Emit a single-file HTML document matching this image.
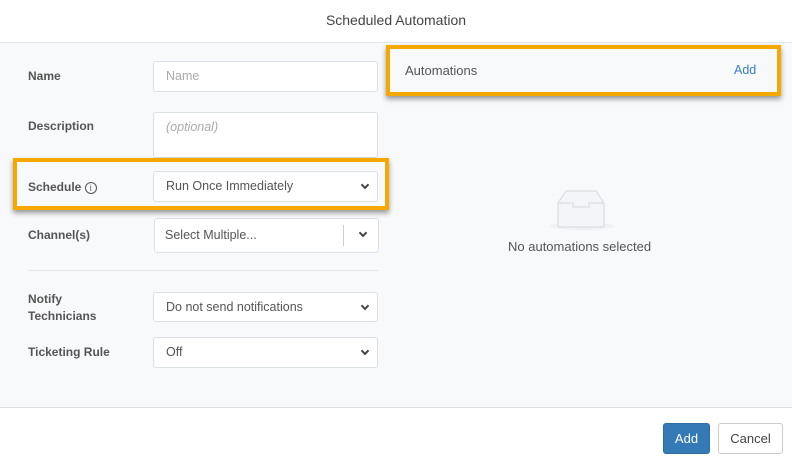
<!DOCTYPE html>
<html><head><style>
*{box-sizing:border-box;margin:0;padding:0}
body{width:792px;height:458px;background:#fff;font-family:"Liberation Sans",sans-serif;position:relative;overflow:hidden;font-size:13px;color:#555}
.a{position:absolute}
.hdr{left:0;top:0;width:792px;height:43px;border-bottom:1px solid #e3e5e8;text-align:center;line-height:40px;font-size:14px;color:#444}
.body{left:0;top:43px;width:792px;height:365px;background:#f8f9fb;border-bottom:1px solid #dcdfe3}
.lbl{font-weight:bold;font-size:12px;color:#555;left:28px}
.in{background:#fff;border:1px solid #dcdfe3;border-radius:3px;left:153px;width:225px;height:31px;line-height:29px;padding-left:12px;font-size:12.5px;color:#555}
.ph{color:#aaa}
.chev{position:absolute;right:9px;top:10px;width:6px;height:6px;border-right:2px solid #444;border-bottom:2px solid #444;transform:rotate(45deg)}
.ob{border:4px solid #f5a800;box-shadow:0 3px 5px rgba(0,0,0,.4)}
.btn{border-radius:3px;height:31px;line-height:29px;text-align:center;font-size:13px}
</style></head><body>
<div class="a hdr">Scheduled Automation</div>
<div class="a body"></div>
<div class="a lbl" style="top:69px">Name</div>
<div class="a in ph" style="top:61px">Name</div>
<div class="a lbl" style="top:119px">Description</div>
<div class="a in ph" style="top:112px;height:46px;font-style:italic;line-height:28px">(optional)</div>
<div class="a ob" style="left:13px;top:158px;width:376px;height:52px"></div>
<div class="a lbl" style="top:180px">Schedule <span style="display:inline-block;width:12px;height:12px;border:1px solid #555;border-radius:50%;font-size:9px;line-height:10px;text-align:center;font-weight:normal">i</span></div>
<div class="a in" style="top:171px">Run Once Immediately<span class="chev"></span></div>
<div class="a lbl" style="top:228px">Channel(s)</div>
<div class="a in" style="top:218px;left:154px;height:35px;line-height:33px;padding-left:10px">Select Multiple...<span style="position:absolute;left:188px;top:6px;width:1px;height:21px;background:#ccc"></span><span class="chev" style="right:12px;top:11px"></span></div>
<div class="a" style="left:28px;top:270px;width:350px;height:1px;background:#e3e5e8"></div>
<div class="a lbl" style="top:291px;line-height:17px">Notify<br>Technicians</div>
<div class="a in" style="top:292px;height:30px;line-height:28px">Do not send notifications<span class="chev"></span></div>
<div class="a lbl" style="top:345px">Ticketing Rule</div>
<div class="a in" style="top:337px">Off<span class="chev"></span></div>
<div class="a ob" style="left:386px;top:45px;width:395px;height:51px"></div>
<div class="a" style="left:405px;top:63px;font-size:13px;color:#555">Automations</div>
<div class="a" style="left:734px;top:63px;font-size:12.5px;color:#3a7fc1">Add</div>
<div class="a" style="left:550px;top:222px;width:64px;height:8px;border-radius:50%;background:#f0f1f4"></div>
<svg class="a" style="left:555px;top:189px" width="52" height="40" viewBox="0 0 52 40"><path d="M3 14 L11 2 H41 L49 14 V36 Q49 38 47 38 H5 Q3 38 3 36 Z" fill="#f4f5f8" stroke="#dfe1e5" stroke-width="1.5"/><path d="M3 14 H18 V18 H34 V14 H49" fill="none" stroke="#dfe1e5" stroke-width="1.5"/></svg>
<div class="a" style="left:508px;top:239px;font-size:13px;color:#555">No automations selected</div>
<div class="a btn" style="left:663px;top:423px;width:47px;background:#337ab7;color:#fff;border:1px solid #2e6da4">Add</div>
<div class="a btn" style="left:718px;top:423px;width:65px;background:#fff;color:#444;border:1px solid #ccc">Cancel</div>
</body></html>
